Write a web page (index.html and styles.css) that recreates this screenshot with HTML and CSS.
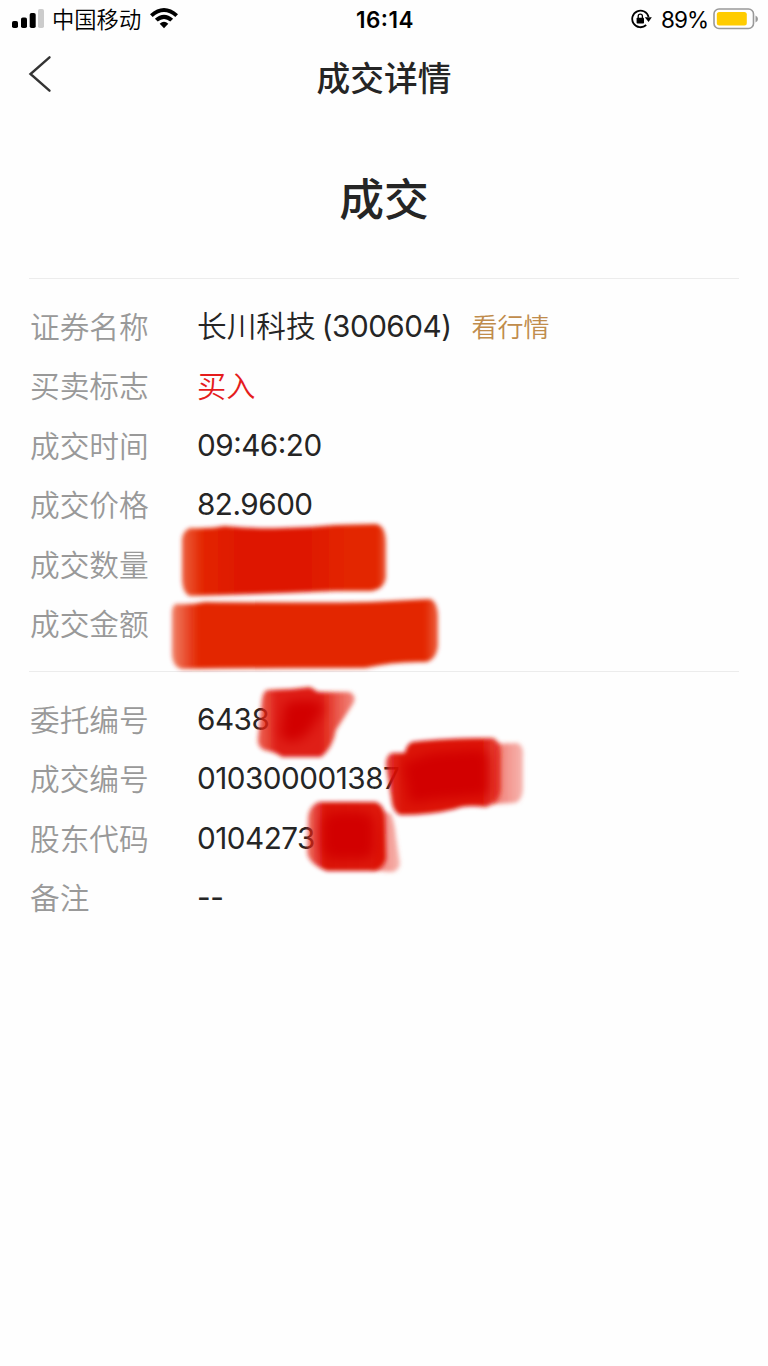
FILE: index.html
```
<!DOCTYPE html>
<html lang="zh-CN">
<head>
    <meta charset="UTF-8">
    <meta name="viewport" content="width=device-width, initial-scale=1.0">
    <title>成交详情</title>
    <link rel="stylesheet" href="styles.css">
</head>
<body>
    <div class="page">
        <!-- Status bar -->
        <div class="status-bar">
            <div class="status-left">
                <svg class="signal" width="32" height="20" viewBox="0 0 32 20">
                    <rect x="0" y="13" width="6" height="7" rx="1.8"/>
                    <rect x="9" y="9.5" width="6" height="10.5" rx="1.8"/>
                    <rect x="17.7" y="5" width="6" height="15" rx="1.8"/>
                    <rect x="26" y="1" width="6" height="19" rx="1.8" fill="#ccc"/>
                </svg>
                <span class="carrier">中国移动</span>
                <svg class="wifi" width="28" height="21" viewBox="0 0 28 21">
                    <path d="M0 6.2Q14 -6 28 6.2L25.3 9Q14 -1 2.7 9Z"/>
                    <path d="M4.9 10.8Q14 2.7 23.1 10.8L20.3 13.6Q14 8.2 7.7 13.6Z"/>
                    <path d="M9.7 15.7Q14 11.8 18.3 15.7L14 20.3Z"/>
                </svg>
            </div>
            <div class="clock">16:14</div>
            <div class="status-right">
                <svg class="lock" width="21" height="20" viewBox="0 0 21 20">
                    <path d="M17.6 8A8.3 8.3 0 1 0 15.2 16" fill="none" stroke="#000" stroke-width="1.8"/>
                    <path d="M13.8 8.3H20.8L17.6 13Z"/>
                    <rect x="5.6" y="8.8" width="7.4" height="5.7" rx="0.8"/>
                    <path d="M7.2 9V7.3a2.1 2.1 0 0 1 4.2 0V9" fill="none" stroke="#000" stroke-width="1.3"/>
                </svg>
                <span class="percent">89%</span>
                <svg class="battery" width="46" height="22" viewBox="0 0 46 22">
                    <rect x="1" y="1" width="39.5" height="19.5" rx="5" fill="none" stroke="#999" stroke-width="1.6"/>
                    <rect x="3.8" y="4" width="30" height="13.5" rx="2.5" fill="#fc0"/>
                    <path d="M42.5 7.5Q45 8.5 45 11T42.5 14.5Z" fill="#999"/>
                </svg>
            </div>
        </div>

        <!-- Navigation -->
        <div class="nav">
            <svg class="back" width="24" height="38" viewBox="0 0 24 38">
                <path d="M21.5 2.3L2.5 19L21.5 35.7" fill="none" stroke="#333" stroke-width="2.4" stroke-linecap="round"/>
            </svg>
            <h1>成交详情</h1>
        </div>

        <h2 class="result">成交</h2>

        <div class="section">
            <div class="row"><span class="label">证券名称</span><span class="value"><span class="cjk">长川科技</span><span class="code">(300604)</span></span><a class="quote">看行情</a></div>
            <div class="row"><span class="label">买卖标志</span><span class="value buy">买入</span></div>
            <div class="row"><span class="label">成交时间</span><span class="value time">09:46:20</span></div>
            <div class="row"><span class="label">成交价格</span><span class="value">82.9600</span></div>
            <div class="row"><span class="label">成交数量</span></div>
            <div class="row"><span class="label">成交金额</span></div>
        </div>
        <div class="section">
            <div class="row"><span class="label">委托编号</span><span class="value">6438</span></div>
            <div class="row"><span class="label">成交编号</span><span class="value">010300001387</span></div>
            <div class="row"><span class="label">股东代码</span><span class="value">0104273</span></div>
            <div class="row"><span class="label">备注</span><span class="value dash">--</span></div>
        </div>

        <!-- Marker strokes over the private values -->
        <svg class="marker" width="380" height="370" viewBox="160 515 380 370">
            <defs>
                <filter id="soft" x="-20%" y="-20%" width="140%" height="140%"><feGaussianBlur stdDeviation="2"/></filter>
                <filter id="softer" x="-30%" y="-30%" width="160%" height="160%"><feGaussianBlur stdDeviation="6"/></filter>
                <linearGradient id="amount">
                    <stop offset="0" stop-color="#e62a08" stop-opacity="0.6"/>
                    <stop offset="0.1" stop-color="#e32503"/>
                    <stop offset="0.95" stop-color="#e32503"/>
                    <stop offset="1" stop-color="#e62a08" stop-opacity="0.75"/>
                </linearGradient>
                <linearGradient id="count">
                    <stop offset="0" stop-color="#e62a08" stop-opacity="0.75"/>
                    <stop offset="0.1" stop-color="#e32503"/>
                    <stop offset="0.3" stop-color="#de1601"/>
                    <stop offset="0.6" stop-color="#de1701"/>
                    <stop offset="0.8" stop-color="#e32503"/>
                    <stop offset="0.96" stop-color="#e32503"/>
                    <stop offset="1" stop-color="#e62a08" stop-opacity="0.75"/>
                </linearGradient>
                <linearGradient id="order">
                    <stop offset="0" stop-color="#e5281a" stop-opacity="0.7"/>
                    <stop offset="0.2" stop-color="#de1508" stop-opacity="0.96"/>
                    <stop offset="0.65" stop-color="#de1508" stop-opacity="0.96"/>
                    <stop offset="1" stop-color="#ec4a3a" stop-opacity="0.65"/>
                </linearGradient>
                <linearGradient id="deal">
                    <stop offset="0" stop-color="#df170a" stop-opacity="0.85"/>
                    <stop offset="0.15" stop-color="#da0d04" stop-opacity="0.97"/>
                    <stop offset="0.85" stop-color="#dd1206" stop-opacity="0.97"/>
                    <stop offset="1" stop-color="#e32a1e" stop-opacity="0.8"/>
                </linearGradient>
                <linearGradient id="holder">
                    <stop offset="0" stop-color="#e5281a" stop-opacity="0.65"/>
                    <stop offset="0.22" stop-color="#da0d04" stop-opacity="0.97"/>
                    <stop offset="1" stop-color="#dc1005" stop-opacity="0.95"/>
                </linearGradient>
                <linearGradient id="tail">
                    <stop offset="0" stop-color="#ea4438" stop-opacity="0.75"/>
                    <stop offset="1" stop-color="#ef6c60" stop-opacity="0.5"/>
                </linearGradient>
            </defs>
            <path filter="url(#soft)" fill="url(#count)" d="M190 528Q210 529 224 526Q280 531 335 525L376 524Q386 526 386 543V578Q384 589 372 591L335 591Q260 594 190 596Q182 593 182 577V538Q184 530 190 528Z"/>
            <path filter="url(#soft)" fill="url(#amount)" d="M176 604Q191 605 205 602Q310 603 370 602L430 599Q437 601 438 615V646Q436 660 426 662Q395 661 365 668Q280 668 182 669Q172 667 172 652V612Q172 606 176 604Z"/>

            <path filter="url(#soft)" fill="url(#order)" d="M267 690L292 689L310 687L318 692L349 692Q359 696 351 707L336 730Q333 748 321 757L282 757Q276 752 264 750Q256 746 258 737L262 699Q263 692 267 690Z"/>
            <path filter="url(#softer)" fill="#d20300" d="M285 703Q304 697 320 702L324 708L309 732Q302 741 288 742L280 735Z"/>

            <path filter="url(#soft)" fill="url(#tail)" d="M494 744L517 743Q524 745 523 756V790Q522 802 514 803L492 804Z"/>
            <path filter="url(#soft)" fill="url(#deal)" d="M412 742Q445 738 493 738Q501 741 501 755L501 790Q499 803 486 807Q465 804 455 809Q431 815 400 815Q392 812 391 797L386 765Q386 755 392 753L405 753Q406 745 412 742Z"/>
            <path filter="url(#softer)" fill="#d20400" d="M403 763L432 753L480 749Q489 752 488 765V795L440 799L410 803Z"/>

            <path filter="url(#soft)" fill="url(#tail)" d="M382 811L391 814Q395 824 396 837L400 864Q398 872 391 872L372 870Z"/>
            <path filter="url(#soft)" fill="url(#holder)" d="M319 802L376 802Q385 806 385 818L386 859Q383 869 373 871L327 871Q309 864 307 853L308 816Q310 805 319 802Z"/>
            <path filter="url(#softer)" fill="#d20400" d="M328 814Q348 809 370 814L374 822V852L367 859H331L323 851V822Z"/>
        </svg>
    </div>
</body>
</html>
```
FILE: styles.css
```
* {
    box-sizing: border-box;
}
body {
    margin: 0;
    background-color: #fefefe;
    color: #252525;
    font-family: Inter, "Noto Sans CJK SC", sans-serif;
}
.page {
    position: relative;
    width: 768px;
    height: 1366px;
    overflow: hidden;
}
.status-bar {
    display: grid;
    grid-template-columns: 1fr auto 1fr;
    align-items: center;
    height: 40px;
    padding: 0 9px 2px 12px;
    color: #000;
}
.status-left,
.status-right {
    display: flex;
    align-items: center;
}
.signal {
    margin-top: -2px;
}
.status-right {
    justify-content: flex-end;
}
.carrier {
    margin: 2px 9px 0 8px;
    font-size: 22.3px;
    font-weight: 350;
    line-height: 36px;
}
.wifi {
    margin-top: -1px;
}
.clock {
    padding-right: 1px;
    font-size: 22.5px;
    font-weight: 600;
    letter-spacing: 0.5px;
    font-feature-settings: "case";
}
.percent {
    margin: 0 5px 0 9px;
    font-size: 22.5px;
    letter-spacing: -1px;
}
.nav {
    display: grid;
    grid-template-columns: 40px 1fr 40px;
    align-items: center;
    height: 76px;
    padding: 0 29px;
}
.back {
    margin-top: -8px;
    margin-left: -1px;
}
h1 {
    margin: 2px 0 0;
    font-size: 33.7px;
    font-weight: 500;
    line-height: 50px;
    text-align: center;
}
.result {
    margin: 0;
    height: 162px;
    font-size: 44.8px;
    font-weight: 500;
    line-height: 169px;
    text-align: center;
}
.section {
    margin: 0 29px;
    padding: 19px 1px 16.4px;
    border-top: 1px solid #ececec;
}
.row {
    display: flex;
    align-items: center;
    height: 59.4px;
    line-height: 59.4px;
}
.label {
    width: 167px;
    color: #999;
    font-size: 29.7px;
    font-weight: 350;
}
.value {
    padding-bottom: 2px;
    font-size: 29.7px;
    letter-spacing: -0.5px;
}
.cjk {
    font-weight: 350;
    letter-spacing: 0;
}
.code {
    margin-left: 6px;
}
.time {
    font-feature-settings: "case";
}
.buy {
    padding-bottom: 0;
    color: #e51c1c;
    font-size: 29.2px;
    font-weight: 350;
    letter-spacing: 0;
}
.quote {
    margin-left: 20px;
    color: #c08c4c;
    font-size: 26px;
    font-weight: 350;
}
.marker {
    position: absolute;
    left: 160px;
    top: 515px;
}
```
